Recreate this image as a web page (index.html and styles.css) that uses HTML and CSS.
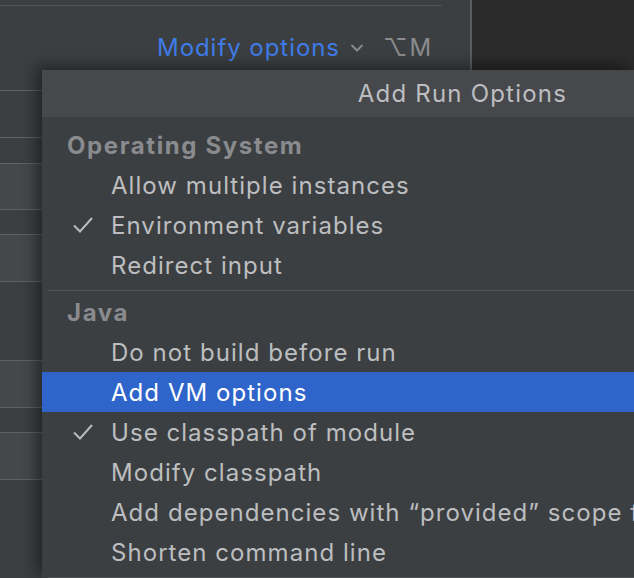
FILE: index.html
```html
<!DOCTYPE html>
<html>
<head>
<meta charset="utf-8">
<link rel="stylesheet" href="styles.css">
</head>
<body>
<div class="window">
  <div class="pane">
    <div class="topline"></div>
    <div class="modify-row">
      <span class="modify-link">Modify options</span>
      <svg class="chevron" width="14" height="10" viewBox="0 0 14 10"><path d="M2 2.5 L7 7.5 L12 2.5" fill="none" stroke="#8a8d90" stroke-width="1.8" stroke-linecap="round" stroke-linejoin="round"/></svg>
      <span class="shortcut">⌥M</span>
    </div>
    <div class="form">
      <div class="field field-a"></div>
      <div class="field field-b"></div>
      <div class="field field-c"></div>
      <div class="field field-d"></div>
      <div class="field field-e"></div>
    </div>
  </div>
  <div class="side"></div>
</div>

<div class="popup">
  <div class="popup-header">Add Run Options</div>
  <div class="popup-list">
    <div class="section">Operating System</div>
    <div class="item"><span class="check"></span>Allow multiple instances</div>
    <div class="item"><span class="check"><svg width="22" height="20" viewBox="0 0 22 20"><path d="M2 10.5 L8 16.5 L20 3" fill="none" stroke="#b9bbbd" stroke-width="2"/></svg></span>Environment variables</div>
    <div class="item"><span class="check"></span>Redirect input</div>
    <div class="sep"></div>
    <div class="section">Java</div>
    <div class="item"><span class="check"></span>Do not build before run</div>
    <div class="item selected"><span class="check"></span>Add VM options</div>
    <div class="item"><span class="check"><svg width="22" height="20" viewBox="0 0 22 20"><path d="M2 10.5 L8 16.5 L20 3" fill="none" stroke="#b9bbbd" stroke-width="2"/></svg></span>Use classpath of module</div>
    <div class="item"><span class="check"></span>Modify classpath</div>
    <div class="item"><span class="check"></span>Add dependencies with “provided” scope f</div>
    <div class="item"><span class="check"></span>Shorten command line</div>
    <div class="sep"></div>
  </div>
</div>
</body>
</html>
```

FILE: styles.css
```css
html, body {
  margin: 0;
  padding: 0;
  width: 634px;
  height: 578px;
  overflow: hidden;
  background: #3c3f41;
  font-family: Inter, "Noto Sans", sans-serif;
}

.window {
  display: flex;
  height: 578px;
}

.pane {
  width: 470px;
  flex: none;
  border-right: 2px solid #5b5e60;
  box-sizing: content-box;
}

.side {
  flex: 1;
  background: #2b2b2b;
}

.topline {
  margin-top: 5px;
  width: 442px;
  height: 1px;
  background: #505355;
}

.modify-row {
  height: 84px;
  display: flex;
  align-items: center;
  padding-left: 157px;
  box-sizing: border-box;
  padding-bottom: 2px;
}

.modify-link {
  color: #3f7ce8;
  font-size: 24px;
  letter-spacing: 0.95px;
}

.chevron {
  margin-left: 10px;
  margin-top: 2px;
}

.shortcut {
  margin-left: 19px;
  color: #8a8c8f;
  font-size: 24px;
  letter-spacing: 2px;
}

.field {
  height: 46px;
  border-top: 1px solid #5f6264;
  border-bottom: 1px solid #5f6264;
}

.field-b, .field-c, .field-d, .field-e {
  background: #45484a;
}

.field-b { margin-top: 25px; height: 45px; }
.field-c { margin-top: 24px; }
.field-d { margin-top: 78px; }
.field-e { margin-top: 24px; }

.popup {
  position: absolute;
  left: 42px;
  top: 70px;
  width: 592px;
  height: 508px;
  overflow: hidden;
  background: #3c3f41;
  box-shadow: -6px -4px 14px rgba(0, 0, 0, 0.45);
}

.popup-header {
  height: 47px;
  background: #46484b;
  display: flex;
  align-items: center;
  justify-content: flex-end;
  padding-right: 67px;
  color: #bcbec0;
  font-size: 24px;
  letter-spacing: 1.2px;
}

.popup-list {
  padding-top: 9px;
}

.section {
  height: 39px;
  display: flex;
  align-items: center;
  padding-left: 25px;
  color: #898b8e;
  font-size: 24px;
  font-weight: 700;
  letter-spacing: 1.6px;
}

.item {
  height: 40px;
  display: flex;
  align-items: center;
  color: #bcbec0;
  font-size: 24px;
  letter-spacing: 1.05px;
  white-space: nowrap;
}

.item.selected {
  background: #2f65ca;
  color: #ffffff;
}

.check {
  width: 69px;
  flex: none;
  display: flex;
  justify-content: flex-end;
  padding-right: 17px;
  box-sizing: border-box;
}

.check svg {
  display: block;
}

.sep {
  height: 1px;
  margin: 5px 0 2px 6px;
  background: #515457;
}
```
